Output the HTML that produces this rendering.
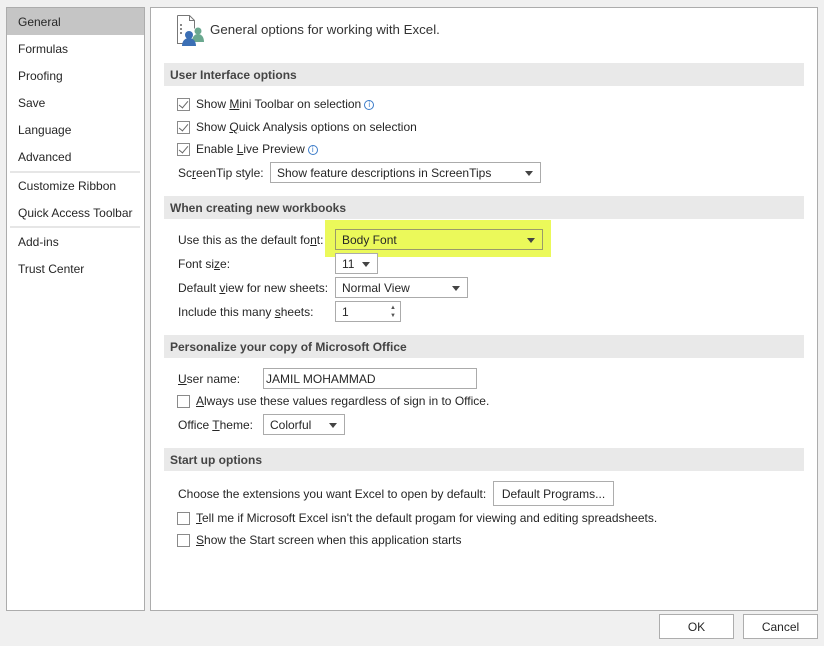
<!DOCTYPE html>
<html><head><style>
*{margin:0;padding:0;box-sizing:border-box}
body{width:824px;height:646px;background:#f0f0f0;font-family:"Liberation Sans",sans-serif;font-size:12px;color:#262626;position:relative;overflow:hidden}
.a{position:absolute;white-space:nowrap}
.panel{position:absolute;background:#fff;border:1px solid #acacac}
.nav{position:absolute;left:12px;font-size:12px}
.sel{position:absolute;left:7px;top:8px;width:137px;height:27px;background:#c5c5c5}
.sep{position:absolute;left:10px;width:130px;height:2px;background:#e6e6e6}
.hdr{position:absolute;left:164px;width:640px;height:23px;background:#e9e9e9;font-weight:bold;color:#444;padding:5px 0 0 6px}
.cb{position:absolute;width:13px;height:13px;border:1px solid #8a8a8a;background:#fff}
.cb.c::after{content:"";position:absolute;left:3px;top:0px;width:4px;height:8px;border:solid #666;border-width:0 1.5px 1.5px 0;transform:rotate(40deg)}
.dd{position:absolute;border:1px solid #ababab;background:#fff;padding:3px 0 0 6px;height:21px}
.dd.ar::after{content:"";position:absolute;right:7px;top:8px;border:4px solid transparent;border-top:5px solid #444;border-bottom:0}
.info{display:inline-block;width:10px;height:10px;border:1px solid #3b7bc8;border-radius:50%;font-size:8px;color:#3b7bc8;text-align:center;line-height:8px;vertical-align:1px;margin-left:3px}
.btn{position:absolute;border:1px solid #adadad;background:#fff;text-align:center;padding-top:5px}
</style></head><body>
<div class="panel" style="left:6px;top:7px;width:139px;height:604px"></div>
<div class="sel"></div>
<div class="a nav" style="left:18px;top:15px">General</div>
<div class="a nav" style="left:18px;top:42px">Formulas</div>
<div class="a nav" style="left:18px;top:69px">Proofing</div>
<div class="a nav" style="left:18px;top:96px">Save</div>
<div class="a nav" style="left:18px;top:123px">Language</div>
<div class="a nav" style="left:18px;top:150px">Advanced</div>
<div class="sep" style="top:171px"></div>
<div class="a nav" style="left:18px;top:179px">Customize Ribbon</div>
<div class="a nav" style="left:18px;top:206px">Quick Access Toolbar</div>
<div class="sep" style="top:226px"></div>
<div class="a nav" style="left:18px;top:235px">Add-ins</div>
<div class="a nav" style="left:18px;top:262px">Trust Center</div>

<div class="panel" style="left:150px;top:7px;width:668px;height:604px"></div>
<svg class="a" style="left:176px;top:14px" width="30" height="32" viewBox="0 0 30 32">
<path d="M1.5 1.5h12l5 5v8M1.5 1.5v28h8" fill="none" stroke="#777" stroke-width="1"/>
<path d="M13.5 1.5v5h5" fill="none" stroke="#777"/>
<rect x="4" y="10" width="2" height="2" fill="#888"/><rect x="4" y="14" width="2" height="2" fill="#888"/><rect x="4" y="18" width="2" height="2" fill="#888"/>
<circle cx="22" cy="17" r="3.5" fill="#6aa88f"/><path d="M16 28c0-5 2.5-8 6-8s6 3 6 8z" fill="#6aa88f"/>
<circle cx="13" cy="21" r="4" fill="#3b6fb5"/><path d="M6 32c0-5 3-8 7-8s7 3 7 8z" fill="#3b6fb5"/>
</svg>
<div class="a" style="left:210px;top:22px;font-size:13.3px;color:#333">General options for working with Excel.</div>

<div class="hdr" style="top:63px">User Interface options</div>
<div class="cb c" style="left:177px;top:98px"></div><div class="a" style="left:196px;top:97px">Show <u>M</u>ini Toolbar on selection<span class="info">i</span></div>
<div class="cb c" style="left:177px;top:121px"></div><div class="a" style="left:196px;top:120px">Show <u>Q</u>uick Analysis options on selection</div>
<div class="cb c" style="left:177px;top:143px"></div><div class="a" style="left:196px;top:142px">Enable <u>L</u>ive Preview<span class="info">i</span></div>
<div class="a" style="left:178px;top:166px">Sc<u>r</u>eenTip style:</div>
<div class="dd ar" style="left:270px;top:162px;width:271px">Show feature descriptions in ScreenTips</div>

<div class="hdr" style="top:196px">When creating new workbooks</div>
<div class="a" style="left:178px;top:233px">Use this as the default fo<u>n</u>t:</div>
<div class="a" style="left:325px;top:220px;width:226px;height:37px;background:#ebf95a"></div>
<div class="dd ar" style="left:335px;top:229px;width:208px;height:21px;background:#ebf95a;border-color:#9a9a6a">Body Font</div>
<div class="a" style="left:178px;top:257px">Font si<u>z</u>e:</div>
<div class="dd ar" style="left:335px;top:253px;width:43px">11</div>
<div class="a" style="left:178px;top:281px">Default <u>v</u>iew for new sheets:</div>
<div class="dd ar" style="left:335px;top:277px;width:133px">Normal View</div>
<div class="a" style="left:178px;top:305px">Include this many <u>s</u>heets:</div>
<div class="dd" style="left:335px;top:301px;width:66px">1</div>
<div class="a" style="left:390px;top:304px;font-size:6px;color:#555;line-height:8px">▲<br>▼</div>

<div class="hdr" style="top:335px">Personalize your copy of Microsoft Office</div>
<div class="a" style="left:178px;top:372px"><u>U</u>ser name:</div>
<div class="a" style="left:263px;top:368px;width:214px;height:21px;border:1px solid #ababab;background:#fff;padding:3px 0 0 2px">JAMIL MOHAMMAD</div>
<div class="cb" style="left:177px;top:395px"></div><div class="a" style="left:196px;top:394px"><u>A</u>lways use these values regardless of sign in to Office.</div>
<div class="a" style="left:178px;top:418px">Office <u>T</u>heme:</div>
<div class="dd ar" style="left:263px;top:414px;width:82px">Colorful</div>

<div class="hdr" style="top:448px">Start up options</div>
<div class="a" style="left:178px;top:487px">Choose the extensions you want Excel to open by default:</div>
<div class="btn" style="left:493px;top:481px;width:121px;height:25px">Default Programs...</div>
<div class="cb" style="left:177px;top:512px"></div><div class="a" style="left:196px;top:511px"><u>T</u>ell me if Microsoft Excel isn't the default progam for viewing and editing spreadsheets.</div>
<div class="cb" style="left:177px;top:534px"></div><div class="a" style="left:196px;top:533px"><u>S</u>how the Start screen when this application starts</div>

<div class="btn" style="left:659px;top:614px;width:75px;height:25px">OK</div>
<div class="btn" style="left:743px;top:614px;width:75px;height:25px">Cancel</div>
</body></html>
